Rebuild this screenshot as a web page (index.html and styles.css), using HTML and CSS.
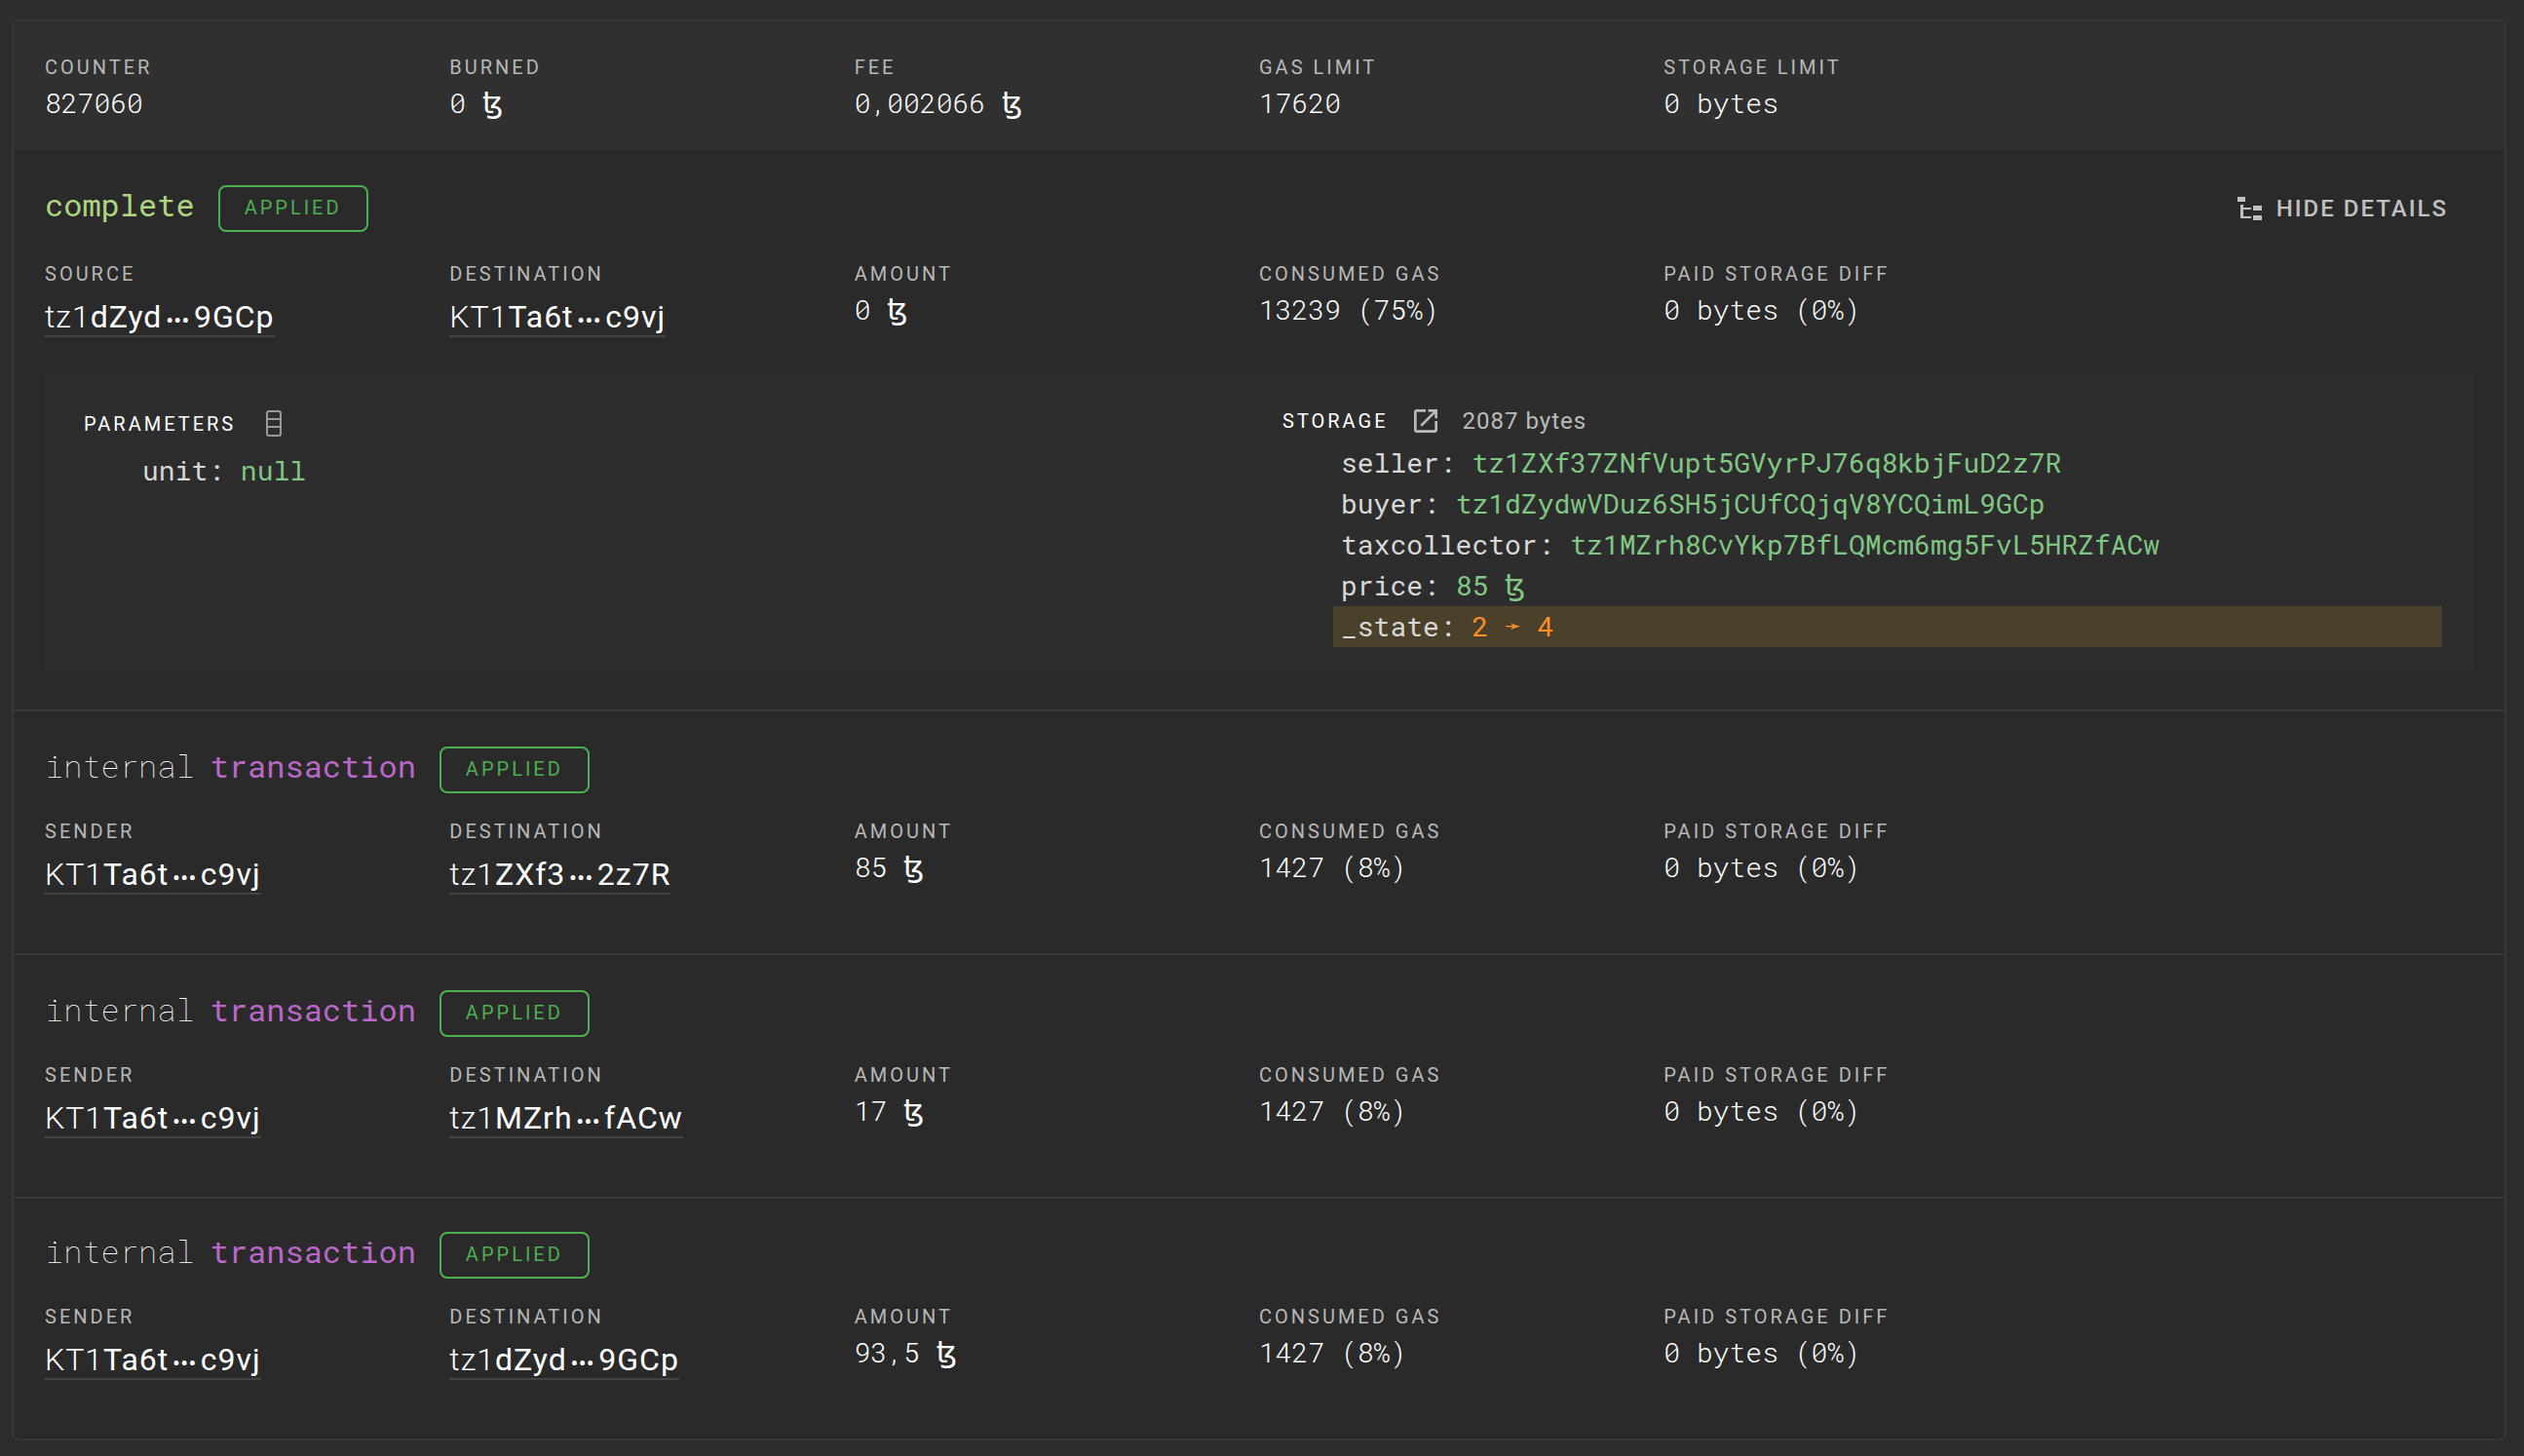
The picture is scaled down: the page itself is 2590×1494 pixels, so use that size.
FILE: index.html
```html
<!DOCTYPE html>
<html lang="en">
<head>
<meta charset="utf-8">
<meta name="viewport" content="width=device-width, initial-scale=1">
<title>Operation details</title>
<link rel="stylesheet" href="styles.css">
</head>
<body>
<main class="card">
  <section class="limits">
    <dl class="fields">
      <div class="field"><dt>COUNTER</dt><dd>827060</dd></div>
      <div class="field"><dt>BURNED</dt><dd>0 <span class="tez">ꜩ</span></dd></div>
      <div class="field"><dt>FEE</dt><dd>0,002066 <span class="tez">ꜩ</span></dd></div>
      <div class="field"><dt>GAS LIMIT</dt><dd>17620</dd></div>
      <div class="field"><dt>STORAGE LIMIT</dt><dd>0 bytes</dd></div>
    </dl>
  </section>

  <section class="operation">
    <header class="heading heading-main">
      <h2 class="title title-entry">complete</h2>
      <span class="badge">APPLIED</span>
      <button class="toggle" type="button">
        <svg class="toggle-icon" viewBox="0 0 26 26" aria-hidden="true"><path fill="currentColor" d="M0 1h8v5H0zM3 9h3v3h8v2H6v7h8v2H3zM16 10h9v5h-9zM16 20h9v5h-9z"/></svg>
        <span>HIDE DETAILS</span>
      </button>
    </header>
    <dl class="fields">
      <div class="field"><dt>SOURCE</dt><dd><a class="address" href="#"><span class="prefix">tz1</span>dZyd<span class="dots">•••</span>9GCp</a></dd></div>
      <div class="field"><dt>DESTINATION</dt><dd><a class="address" href="#"><span class="prefix">KT1</span>Ta6t<span class="dots">•••</span>c9vj</a></dd></div>
      <div class="field"><dt>AMOUNT</dt><dd>0 <span class="tez">ꜩ</span></dd></div>
      <div class="field"><dt>CONSUMED GAS</dt><dd>13239 (75%)</dd></div>
      <div class="field"><dt>PAID STORAGE DIFF</dt><dd>0 bytes (0%)</dd></div>
    </dl>
    <div class="details">
      <section class="parameters">
        <div class="details-head">
          <h3>PARAMETERS</h3>
          <button class="icon-button" type="button" aria-label="Show raw parameters">
            <svg class="raw-icon" viewBox="0 0 18 28" aria-hidden="true"><g fill="none" stroke="currentColor" stroke-width="2"><rect x="2" y="1" width="14" height="25" rx="2"/><path d="M2 9h14M2 17h14"/></g></svg>
          </button>
        </div>
        <ul class="tree">
          <li>unit: <span class="value">null</span></li>
        </ul>
      </section>
      <section class="storage">
        <div class="details-head">
          <h3>STORAGE</h3>
          <a class="icon-button" href="#" aria-label="Open storage">
            <svg class="open-icon" viewBox="3 3 18 18" aria-hidden="true"><path fill="currentColor" d="M19 19H5V5h7V3H5c-1.110 0-2 .9-2 2v14c0 1.100.890 2 2 2h14c1.100 0 2-.9 2-2v-7h-2v7zM14 3v2h3.590l-9.830 9.830 1.410 1.410L19 6.410V10h2V3h-7z"/></svg>
          </a>
          <span class="size">2087 bytes</span>
        </div>
        <ul class="tree">
          <li>seller: <span class="value">tz1ZXf37ZNfVupt5GVyrPJ76q8kbjFuD2z7R</span></li>
          <li>buyer: <span class="value">tz1dZydwVDuz6SH5jCUfCQjqV8YCQimL9GCp</span></li>
          <li>taxcollector: <span class="value">tz1MZrh8CvYkp7BfLQMcm6mg5FvL5HRZfACw</span></li>
          <li>price: <span class="value">85 <span class="tez">ꜩ</span></span></li>
          <li class="changed">_state: <span class="value">2 <span class="arrow">➛</span> 4</span></li>
        </ul>
      </section>
    </div>
  </section>

  <section class="operation">
    <header class="heading">
      <h2 class="title"><span class="kind">internal</span> <span>transaction</span></h2>
      <span class="badge">APPLIED</span>
    </header>
    <dl class="fields">
      <div class="field"><dt>SENDER</dt><dd><a class="address" href="#"><span class="prefix">KT1</span>Ta6t<span class="dots">•••</span>c9vj</a></dd></div>
      <div class="field"><dt>DESTINATION</dt><dd><a class="address" href="#"><span class="prefix">tz1</span>ZXf3<span class="dots">•••</span>2z7R</a></dd></div>
      <div class="field"><dt>AMOUNT</dt><dd>85 <span class="tez">ꜩ</span></dd></div>
      <div class="field"><dt>CONSUMED GAS</dt><dd>1427 (8%)</dd></div>
      <div class="field"><dt>PAID STORAGE DIFF</dt><dd>0 bytes (0%)</dd></div>
    </dl>
  </section>

  <section class="operation">
    <header class="heading">
      <h2 class="title"><span class="kind">internal</span> <span>transaction</span></h2>
      <span class="badge">APPLIED</span>
    </header>
    <dl class="fields">
      <div class="field"><dt>SENDER</dt><dd><a class="address" href="#"><span class="prefix">KT1</span>Ta6t<span class="dots">•••</span>c9vj</a></dd></div>
      <div class="field"><dt>DESTINATION</dt><dd><a class="address" href="#"><span class="prefix">tz1</span>MZrh<span class="dots">•••</span>fACw</a></dd></div>
      <div class="field"><dt>AMOUNT</dt><dd>17 <span class="tez">ꜩ</span></dd></div>
      <div class="field"><dt>CONSUMED GAS</dt><dd>1427 (8%)</dd></div>
      <div class="field"><dt>PAID STORAGE DIFF</dt><dd>0 bytes (0%)</dd></div>
    </dl>
  </section>

  <section class="operation">
    <header class="heading">
      <h2 class="title"><span class="kind">internal</span> <span>transaction</span></h2>
      <span class="badge">APPLIED</span>
    </header>
    <dl class="fields">
      <div class="field"><dt>SENDER</dt><dd><a class="address" href="#"><span class="prefix">KT1</span>Ta6t<span class="dots">•••</span>c9vj</a></dd></div>
      <div class="field"><dt>DESTINATION</dt><dd><a class="address" href="#"><span class="prefix">tz1</span>dZyd<span class="dots">•••</span>9GCp</a></dd></div>
      <div class="field"><dt>AMOUNT</dt><dd>93,5 <span class="tez">ꜩ</span></dd></div>
      <div class="field"><dt>CONSUMED GAS</dt><dd>1427 (8%)</dd></div>
      <div class="field"><dt>PAID STORAGE DIFF</dt><dd>0 bytes (0%)</dd></div>
    </dl>
  </section>
</main>
</body>
</html>
```

FILE: styles.css
```css
* {
  box-sizing: border-box;
}

body,
h2,
h3,
dl,
dd,
ul {
  margin: 0;
}

body {
  padding: 20px 18px 16px 12px;
  background: #2d2d2d;
  color: #fff;
  font-family: Roboto, "Liberation Sans", sans-serif;
  font-size: 28px;
}

.card {
  border: 2px solid #383838;
  border-radius: 8px;
  background: #2a2a2a;
  overflow: hidden;
}

.limits {
  padding: 32px 32px 26px;
  background: #303030;
}

.operation {
  padding: 36px 32px 40px;
}

.operation + .operation {
  padding-bottom: 60px;
  border-top: 2px solid #383838;
}

.operation:last-child {
  padding-top: 34px;
}

.heading {
  display: flex;
  align-items: flex-start;
  height: 48px;
  margin-bottom: 24px;
}

.heading-main {
  margin-bottom: 28px;
}

.title {
  display: flex;
  gap: 16px;
  margin-right: 24px;
  color: #ba68c8;
  font: 400 32px/40px "Roboto Mono", "Liberation Mono", monospace;
}

.title-entry {
  color: #aed581;
}

.kind {
  color: #fff;
  font-weight: 100;
}

.badge {
  height: 48px;
  padding: 0 25px;
  border: 2px solid #4caf50;
  border-radius: 8px;
  color: #4caf50;
  font-size: 20px;
  line-height: 43px;
  letter-spacing: 3px;
}

.toggle {
  display: flex;
  align-items: center;
  gap: 14px;
  margin-left: auto;
  padding: 0 26px;
  border: 0;
  background: none;
  color: #c0c0c0;
  font: 500 24px/48px Roboto, "Liberation Sans", sans-serif;
  letter-spacing: 2px;
}

.toggle-icon {
  width: 26px;
  height: 26px;
}

.fields {
  display: grid;
  grid-template-columns: repeat(6, 1fr);
}

.field dt {
  color: #b8b8b8;
  font-size: 20px;
  line-height: 30px;
  letter-spacing: 3px;
}

.field dd {
  color: #fff;
  font-family: "Roboto Mono", "Liberation Mono", monospace;
  font-weight: 300;
  line-height: 44px;
}

.tez {
  color: #fff;
  font-family: "DejaVu Sans", sans-serif;
  font-size: 30px;
  font-weight: 400;
  line-height: 1;
}

.address {
  display: block;
  width: fit-content;
  margin-top: 10px;
  border-bottom: 2px solid #444;
  color: #fff;
  font: 400 32px/38px Roboto, "Liberation Sans", sans-serif;
  letter-spacing: 1px;
  text-decoration: none;
}

.prefix {
  font-weight: 300;
}

.dots {
  padding: 0 4px;
  font-size: 20px;
  font-weight: 700;
  line-height: 1;
}

.details {
  display: grid;
  grid-template-columns: 1fr 1fr;
  margin-top: 36px;
  background: #2d2d2d;
}

.parameters {
  padding: 34px 32px 24px 40px;
}

.storage {
  padding: 32px 32px 24px 24px;
}

.details-head {
  display: flex;
  align-items: center;
  gap: 26px;
  height: 36px;
  margin-bottom: 4px;
}

.parameters .details-head {
  gap: 30px;
  height: 38px;
  margin-bottom: 8px;
}

.details-head h3 {
  font-size: 20px;
  font-weight: 400;
  letter-spacing: 3px;
}

.icon-button {
  display: flex;
  padding: 0;
  border: 0;
  background: none;
  color: #bbb;
}

.raw-icon {
  width: 18px;
  height: 28px;
  color: #999;
}

.open-icon {
  width: 24px;
  height: 24px;
}

.size {
  color: #bbb;
  font-size: 24px;
  letter-spacing: 1px;
}

.tree {
  padding: 0 0 0 52px;
  color: #d8d8d8;
  font-family: "Roboto Mono", "Liberation Mono", monospace;
  line-height: 42px;
  list-style: none;
}

.tree li {
  padding-left: 8px;
}

.tree .value,
.tree .tez {
  color: #81c784;
}

.changed {
  background: #4b412b;
}

.tree .changed .value {
  color: #ff9029;
}

.arrow {
  font-family: "DejaVu Sans", sans-serif;
  font-size: 20px;
  line-height: 1;
  vertical-align: 4px;
}
```
